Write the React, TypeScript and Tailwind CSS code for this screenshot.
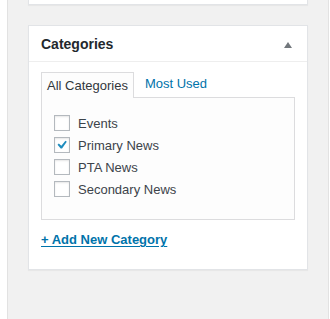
import { useState } from 'react';

const categories = [
  { name: 'Events', checked: false },
  { name: 'Primary News', checked: true },
  { name: 'PTA News', checked: false },
  { name: 'Secondary News', checked: false },
];

const CheckBox = ({ checked }: { checked: boolean }) => (
  <span className="w-4 h-4 shrink-0 border border-[#b4b9be] bg-white shadow-[inset_0_1px_2px_rgba(0,0,0,0.1)] flex items-center justify-center">
    {checked && (
      <svg width="18" height="18" viewBox="0 0 20 20" className="-ml-[1px]">
        <path d="M15.2 4.2l1.9 1.3-6.4 9.3H8.9L4.7 9.6l1.7-1.6 3.4 3.1z" fill="#1e8cbe" />
      </svg>
    )}
  </span>
);

export default function App() {
  const [tab] = useState('all');

  return (
    <div className="w-[330px] h-[319px] flex bg-white font-['Liberation_Sans',Arial,sans-serif] text-[13px] text-[#444]">
      <div className="w-[7px] bg-white" />
      <div className="flex-1 bg-[#f1f1f1] border-l border-r border-[#e2e2e2] pl-[20px] flex flex-col">
        {/* previous box */}
        <div className="w-[280px] h-[5px] bg-white border border-t-0 border-[#e2e4e7] shadow-[0_1px_1px_rgba(0,0,0,0.04)]" />

        {/* Categories box */}
        <div className="mt-[20px] w-[280px] bg-white border border-[#e2e4e7] shadow-[0_1px_1px_rgba(0,0,0,0.04)]">
          <div className="h-[36px] border-b border-[#eeeeee] flex items-center justify-between pl-[12px] pr-[14px]">
            <h2 className="text-[14px] font-semibold text-[#23282d] leading-none">Categories</h2>
            <svg width="10" height="8" viewBox="0 0 10 8" className="mt-[2px]">
              <path d="M5 1L9 7H1z" fill="#72777c" />
            </svg>
          </div>

          <div className="px-[12px] pt-[9px] pb-[20px]">
            <div className="flex items-end">
              <div
                className={`h-[26px] px-[5px] border border-b-0 border-[#dcdcde] bg-[#fdfdfd] flex items-center text-[#32373c] relative -mb-px z-10 ${
                  tab === 'all' ? '' : ''
                }`}
              >
                All Categories
              </div>
              <div className="h-[26px] px-[11px] flex items-center text-[#0073aa]">Most Used</div>
            </div>
            <div className="border border-[#dcdcde] bg-[#fdfdfd] pl-[12px] pt-[17px] pb-[22px]">
              <ul className="flex flex-col gap-[6px]">
                {categories.map((c) => (
                  <li key={c.name} className="flex items-center gap-[8px] h-4 text-[#3c434a]">
                    <CheckBox checked={c.checked} />
                    <span className="mt-[2px]">{c.name}</span>
                  </li>
                ))}
              </ul>
            </div>
            <a className="block mt-[11px] font-bold text-[#0073aa] underline leading-[18px] underline-offset-[2px]">
              + Add New Category
            </a>
          </div>
        </div>
      </div>
      <div className="w-[1px] bg-white" />
    </div>
  );
}
